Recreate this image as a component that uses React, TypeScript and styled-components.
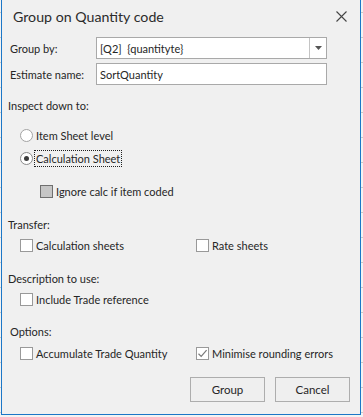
import styled, { createGlobalStyle } from "styled-components";

const GlobalStyle = createGlobalStyle`
  html, body {
    margin: 0;
    padding: 0;
  }
  body {
    width: 363px;
    height: 417px;
    overflow: hidden;
    background-color: #f3f3f3;
    background-image: repeating-linear-gradient(
      to bottom,
      transparent 0,
      transparent 12px,
      #c9c9c9 12px,
      #c9c9c9 13px,
      transparent 13px,
      transparent 25px
    );
    font-family: "Lato", "Liberation Sans", sans-serif;
    color: #262626;
  }
`;

const Dialog = styled.div`
  box-sizing: border-box;
  margin-left: 1px;
  width: 360px;
  height: 415px;
  background: #f0f0f0;
  border: 1px solid #1c77c7;
  border-top: none;
  display: flex;
  flex-direction: column;
`;

const TitleBar = styled.div`
  height: 32px;
  display: flex;
  align-items: center;
  justify-content: space-between;
  padding: 0 13px 0 11px;
`;

const Title = styled.div`
  font-size: 14.2px;
  color: #2b2b2b;
  margin-top: 1px;
`;

const CloseButton = styled.div`
  width: 12px;
  height: 12px;
  display: flex;
  align-items: center;
  justify-content: center;
`;

const Body = styled.div`
  flex: 1;
  display: flex;
  flex-direction: column;
  padding: 5px 10px 0 6px;
  font-size: 11px;
`;

const FieldGrid = styled.div`
  display: grid;
  grid-template-columns: 88px 231px;
  row-gap: 4px;
  align-items: center;
`;

const FieldLabel = styled.div`
  padding-left: 2px;
`;

const Box = styled.div`
  box-sizing: border-box;
  height: 22px;
  background: #fff;
  border: 1px solid #a9a9a9;
  display: flex;
  align-items: center;
`;

const BoxText = styled.span`
  flex: 1;
  padding-left: 3px;
  white-space: pre;
`;

const DropButton = styled.div`
  width: 16px;
  height: 100%;
  border-left: 1px solid #c4c4c4;
  display: flex;
  align-items: center;
  justify-content: center;
`;

const SectionLabel = styled.div<{ $top: number; $indent?: number }>`
  margin-top: ${(p) => p.$top}px;
  padding-left: ${(p) => p.$indent ?? 0}px;
  height: 16px;
  line-height: 16px;
`;

const OptionRow = styled.div<{ $top: number; $indent?: number }>`
  margin-top: ${(p) => p.$top}px;
  padding-left: ${(p) => p.$indent ?? 12}px;
  height: 20px;
  display: grid;
  grid-template-columns: 176px auto;
  align-items: center;
`;

const Option = styled.label`
  display: flex;
  align-items: center;
  gap: 3px;
`;

const CheckBox = styled.span<{ $filled?: boolean }>`
  box-sizing: border-box;
  width: 13px;
  height: 13px;
  border: 1px solid ${(p) => (p.$filled ? "#6f6f6f" : "#999")};
  background: ${(p) => (p.$filled ? "#c6c6c6" : "#fff")};
  display: flex;
  align-items: center;
  justify-content: center;
`;

const Radio = styled.span<{ $checked?: boolean }>`
  box-sizing: border-box;
  width: 13px;
  height: 13px;
  border-radius: 50%;
  border: 1px solid ${(p) => (p.$checked ? "#8a8a8a" : "#a3a3a3")};
  background: #fff;
  display: flex;
  align-items: center;
  justify-content: center;

  &::after {
    content: "";
    display: ${(p) => (p.$checked ? "block" : "none")};
    width: 5px;
    height: 5px;
    border-radius: 50%;
    background: #3c3c3c;
  }
`;

const OptionText = styled.span<{ $focus?: boolean }>`
  padding: 1px 1px;
  border: 1px dotted ${(p) => (p.$focus ? "#202020" : "transparent")};
  margin-left: -2px;
`;

const ButtonRow = styled.div`
  margin-top: 14px;
  display: flex;
  justify-content: flex-end;
  gap: 10px;
`;

const Button = styled.button`
  box-sizing: border-box;
  width: 75px;
  height: 25px;
  background: #efefef;
  border: 1px solid #adadad;
  font-family: inherit;
  font-size: 11.5px;
  color: #262626;
  padding: 0;
`;

function CloseIcon() {
  return (
    <svg width="11" height="11" viewBox="0 0 11 11">
      <path d="M0.5 0.5 L10.5 10.5 M10.5 0.5 L0.5 10.5" stroke="#444" strokeWidth="1.1" />
    </svg>
  );
}

function Check({ checked }: { checked?: boolean }) {
  return (
    <CheckBox>
      {checked && (
        <svg width="11" height="11" viewBox="0 0 11 11">
          <path d="M1.5 5.8 L4.2 8.4 L9.6 2.2" fill="none" stroke="#7a7a7a" strokeWidth="1.2" />
        </svg>
      )}
    </CheckBox>
  );
}

export default function App() {
  return (
    <>
      <GlobalStyle />
      <Dialog>
        <TitleBar>
          <Title>Group on Quantity code</Title>
          <CloseButton>
            <CloseIcon />
          </CloseButton>
        </TitleBar>
        <Body>
          <FieldGrid>
            <FieldLabel>Group by:</FieldLabel>
            <Box>
              <BoxText>{"[Q2]  {quantityte}"}</BoxText>
              <DropButton>
                <svg width="7" height="4" viewBox="0 0 7 4">
                  <path d="M0 0 H7 L3.5 4 Z" fill="#555" />
                </svg>
              </DropButton>
            </Box>
            <FieldLabel>Estimate name:</FieldLabel>
            <Box>
              <BoxText>SortQuantity</BoxText>
            </Box>
          </FieldGrid>

          <SectionLabel $top={13}>Inspect down to:</SectionLabel>
          <OptionRow $top={11}>
            <Option>
              <Radio />
              <OptionText>Item Sheet level</OptionText>
            </Option>
          </OptionRow>
          <OptionRow $top={3}>
            <Option>
              <Radio $checked />
              <OptionText $focus>Calculation Sheet</OptionText>
            </Option>
          </OptionRow>
          <OptionRow $top={13} $indent={32}>
            <Option>
              <CheckBox $filled />
              <OptionText>Ignore calc if item coded</OptionText>
            </Option>
          </OptionRow>

          <SectionLabel $top={16}>Transfer:</SectionLabel>
          <OptionRow $top={2}>
            <Option>
              <Check />
              <OptionText>Calculation sheets</OptionText>
            </Option>
            <Option>
              <Check />
              <OptionText>Rate sheets</OptionText>
            </Option>
          </OptionRow>

          <SectionLabel $top={16}>Description to use:</SectionLabel>
          <OptionRow $top={2}>
            <Option>
              <Check />
              <OptionText>Include Trade reference</OptionText>
            </Option>
          </OptionRow>

          <SectionLabel $top={15} $indent={2}>Options:</SectionLabel>
          <OptionRow $top={3}>
            <Option>
              <Check />
              <OptionText>Accumulate Trade Quantity</OptionText>
            </Option>
            <Option>
              <Check checked />
              <OptionText>Minimise rounding errors</OptionText>
            </Option>
          </OptionRow>

          <ButtonRow>
            <Button>Group</Button>
            <Button>Cancel</Button>
          </ButtonRow>
        </Body>
      </Dialog>
    </>
  );
}
